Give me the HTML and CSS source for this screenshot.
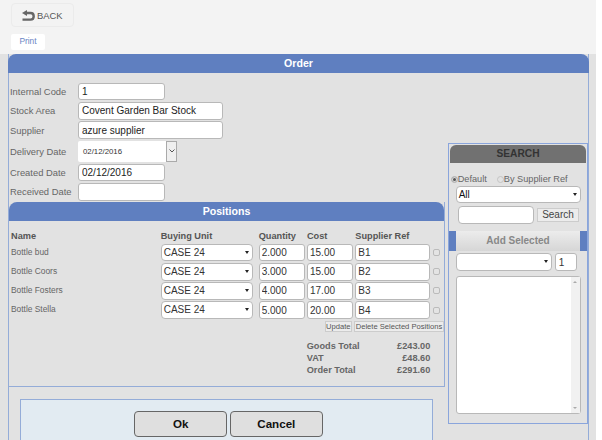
FILE: index.html
```html
<!DOCTYPE html>
<html lang="en">
<head>
    <meta charset="UTF-8">
    <title>Order</title>
    <link rel="stylesheet" href="styles.css">
</head>
<body>
    <div class="page">
        <div class="top">
            <a class="back-btn">
                <svg class="back-icon" width="13" height="11" viewBox="0 0 13 11"><path d="M5 0 L0 3 L5 6 Z" fill="#666"/><path d="M4 3 H8.5 Q11.7 3 11.7 6.2 Q11.7 9.6 8.5 9.6 H0.5" fill="none" stroke="#666" stroke-width="2.4"/></svg>
                BACK
            </a>
            <a class="print-btn">Print</a>
        </div>
        <div class="main">
            <div class="panel order">
                <div class="panel-title">Order</div>
                <div class="order-body">
                    <div class="left">
                        <div class="fields">
                            <div class="field"><label>Internal Code</label><input class="short" type="text" value="1"></div>
                            <div class="field"><label>Stock Area</label><input class="long" type="text" value="Covent Garden Bar Stock"></div>
                            <div class="field"><label>Supplier</label><input class="long" type="text" value="azure supplier"></div>
                            <div class="field date-field">
                                <label>Delivery Date</label>
                                <div class="date-box"><span class="date-val">02/12/2016</span><span class="date-arrow"><svg width="6" height="4" viewBox="0 0 6 4"><path d="M0.5 0.5 L3 3 L5.5 0.5" fill="none" stroke="#555"/></svg></span></div>
                            </div>
                            <div class="field"><label>Created Date</label><input class="short" type="text" value="02/12/2016"></div>
                            <div class="field"><label>Received Date</label><input class="short" type="text" value=""></div>
                        </div>
                        <div class="panel positions">
                            <div class="panel-title">Positions</div>
                            <div class="pos-body">
                                <div class="row head">
                                    <span class="c-name">Name</span><span class="c-unit">Buying Unit</span><span class="c-qty">Quantity</span><span class="c-cost">Cost</span><span class="c-ref">Supplier Ref</span>
                                </div>
                                <div class="row">
                                    <span class="c-name">Bottle bud</span>
                                    <span class="c-unit"><span class="sel">CASE 24<i class="caret"></i></span></span>
                                    <span class="c-qty"><input type="text" value="2.000"></span><span class="c-cost"><input type="text" value="15.00"></span><span class="c-ref"><input type="text" value="B1"></span>
                                    <span class="check"></span>
                                </div>
                                <div class="row">
                                    <span class="c-name">Bottle Coors</span>
                                    <span class="c-unit"><span class="sel">CASE 24<i class="caret"></i></span></span>
                                    <span class="c-qty"><input type="text" value="3.000"></span><span class="c-cost"><input type="text" value="15.00"></span><span class="c-ref"><input type="text" value="B2"></span>
                                    <span class="check"></span>
                                </div>
                                <div class="row">
                                    <span class="c-name">Bottle Fosters</span>
                                    <span class="c-unit"><span class="sel">CASE 24<i class="caret"></i></span></span>
                                    <span class="c-qty"><input type="text" value="4.000"></span><span class="c-cost"><input type="text" value="17.00"></span><span class="c-ref"><input type="text" value="B3"></span>
                                    <span class="check"></span>
                                </div>
                                <div class="row">
                                    <span class="c-name">Bottle Stella</span>
                                    <span class="c-unit"><span class="sel">CASE 24<i class="caret"></i></span></span>
                                    <span class="c-qty"><input type="text" value="5.000"></span><span class="c-cost"><input type="text" value="20.00"></span><span class="c-ref"><input type="text" value="B4"></span>
                                    <span class="check"></span>
                                </div>
                                <div class="pos-actions">
                                    <button class="mini">Update</button>
                                    <button class="mini">Delete Selected Positions</button>
                                </div>
                                <div class="totals">
                                    <div class="total"><span>Goods Total</span><span>£243.00</span></div>
                                    <div class="total"><span>VAT</span><span>£48.60</span></div>
                                    <div class="total"><span>Order Total</span><span>£291.60</span></div>
                                </div>
                            </div>
                        </div>
                        <div class="actions">
                            <button class="big">Ok</button>
                            <button class="big">Cancel</button>
                        </div>
                    </div>
                    <div class="search">
                        <div class="search-title">SEARCH</div>
                        <div class="search-body">
                            <div class="radios">
                                <span class="radio-item"><i class="radio on"></i>Default</span>
                                <span class="radio-item"><i class="radio"></i>By Supplier Ref</span>
                            </div>
                            <span class="sel sel-all">All<i class="caret"></i></span>
                            <div class="search-line">
                                <input class="search-input" type="text">
                                <button class="search-btn">Search</button>
                            </div>
                        </div>
                        <div class="add-bar"><span class="add-btn">Add Selected</span></div>
                        <div class="add-body">
                            <div class="add-line">
                                <span class="sel sel-empty"><i class="caret"></i></span>
                                <input class="add-qty" type="text" value="1">
                            </div>
                            <div class="listbox">
                                <div class="scrollbar"><i class="up"></i><i class="down"></i></div>
                            </div>
                        </div>
                    </div>
                </div>
            </div>
        </div>
    </div>
</body>
</html>
```

FILE: styles.css
```css
* {
    box-sizing: border-box;
}
html, body {
    margin: 0;
    padding: 0;
    height: 440px;
    overflow: hidden;
    background: #fff;
}
body {
    font-family: "Liberation Sans", Arial, sans-serif;
    font-size: 10px;
    color: #555;
}
input {
    outline: none;
    background: #fff;
}
.page {
    width: 596px;
    height: 440px;
    background: #e2e2e2;
    overflow: hidden;
}
.top {
    height: 54px;
    background: #f3f3f3;
    padding: 3px 0 0 11px;
}
.back-btn {
    display: flex;
    align-items: center;
    width: 63px;
    height: 24px;
    border: 1px solid #ebebeb;
    border-radius: 4px;
    padding-left: 10px;
    font-size: 9.4px;
    color: #555;
}
.back-icon {
    margin-right: 2px;
}
.print-btn {
    display: block;
    width: 34px;
    height: 16px;
    margin-top: 7px;
    background: #fff;
    border-radius: 2px;
    text-align: center;
    font-size: 8.4px;
    line-height: 15px;
    color: #6a85c4;
}
.main {
    padding: 0 7px 0 8px;
}
.panel {
    border: 1px solid #94acd8;
}
.panel-title {
    background: #5f7fc0;
    color: #fff;
    font-weight: bold;
    font-size: 10.6px;
    text-align: center;
    border-radius: 8px 8px 0 0;
    height: 19px;
    line-height: 18px;
}
.order {
    height: 400px;
    border: 0;
    border-left: 1px solid #94acd8;
    border-right: 1px solid #94acd8;
}
.order > .panel-title {
    margin: 0 -1px;
}
.order-body {
    display: flex;
}
.left {
    width: 435px;
    flex: none;
}
.fields {
    height: 129px;
    padding-top: 9px;
}
.field {
    display: flex;
    align-items: center;
    height: 19.3px;
    font-size: 9.4px;
}
.field label {
    width: 69px;
    flex: none;
    padding-left: 1px;
    color: #666;
}
.field input {
    height: 17.5px;
    padding: 0 3px;
    border: 1px solid #b8b8b8;
    border-radius: 3px;
    font: 10px "Liberation Sans", Arial, sans-serif;
    color: #222;
}
.short {
    width: 87px;
}
.long {
    width: 145px;
}
.date-field {
    height: 23px;
}
.date-box {
    display: flex;
    width: 99px;
    height: 21px;
}
.date-val {
    width: 88px;
    padding-left: 5px;
    background: #fff;
    font-size: 7.8px;
    line-height: 21px;
    color: #333;
    border-radius: 2px 0 0 2px;
}
.date-arrow {
    width: 11px;
    display: flex;
    align-items: center;
    justify-content: center;
    background: #efefef;
    border: 1px solid #aaa;
}
.positions {
    height: 185px;
    width: 436px;
    border-top: 0;
    border-left: 0;
}
.positions > .panel-title {
    height: 18.5px;
    line-height: 19px;
}
.pos-body {
    padding: 8px 0 0 2px;
}
.row {
    display: flex;
    align-items: center;
    height: 19.2px;
    font-size: 8.4px;
    color: #666;
}
.row.head {
    height: 14.5px;
    font-weight: bold;
    font-size: 9.2px;
    color: #555;
}
.row .c-name {
    padding-bottom: 2px;
}
.row.head .c-name {
    padding-bottom: 0;
}
.row > * {
    flex: none;
}
.c-name {
    width: 149.7px;
}
.c-unit {
    width: 98px;
}
.c-qty {
    width: 48.3px;
}
.c-cost {
    width: 48.3px;
}
.c-ref {
    width: 77.7px;
}
.row input {
    display: block;
    height: 17.5px;
    padding: 0 2px;
    border: 1px solid #b8b8b8;
    border-radius: 3px;
    font: 10px "Liberation Sans", Arial, sans-serif;
    color: #333;
}
.c-qty input {
    width: 46px;
}
.c-cost input {
    width: 45.7px;
}
.c-ref input {
    width: 74.7px;
}
.sel {
    position: relative;
    display: block;
    height: 17.5px;
    width: 92.5px;
    line-height: 15.5px;
    padding: 0 2px;
    background: #fff;
    border: 1px solid #b8b8b8;
    border-radius: 4px;
    font-size: 10px;
    color: #333;
}
.caret {
    position: absolute;
    right: 3px;
    top: 6px;
    border: 2px solid transparent;
    border-top: 3px solid #222;
    border-bottom: 0;
}
.check {
    width: 7px;
    height: 7px;
    background: #e4e4e4;
    border: 1px solid #bbb;
    border-radius: 2px;
}
.pos-actions {
    display: flex;
    justify-content: flex-end;
    gap: 2.3px;
    padding-top: 1.4px;
    height: 12px;
}
.mini {
    height: 10.5px;
    padding: 0;
    border: 1px solid #ccc;
    background: #ececec;
    font: 7.6px "Liberation Sans", Arial, sans-serif;
    color: #555;
}
.mini:first-child {
    width: 26.7px;
}
.mini:last-child {
    width: 90px;
}
.totals {
    margin: 9px 0 0 295.7px;
    width: 123.6px;
}
.total {
    display: flex;
    justify-content: space-between;
    height: 12px;
    font-size: 9.2px;
    font-weight: bold;
    color: #666;
}
.actions {
    display: flex;
    justify-content: center;
    gap: 2.6px;
    width: 413px;
    height: 60px;
    margin: 12px 0 0 11px;
    padding: 10.5px 0 0 4px;
    background: #e2ebf2;
    border: 1px solid #94acd8;
}
.big {
    width: 93px;
    height: 26.5px;
    border: 1px solid #666;
    border-radius: 4px;
    background: #dfdfdf;
    font: bold 11.6px "Liberation Sans", Arial, sans-serif;
    color: #111;
}
.search {
    width: 140px;
    height: 281px;
    flex: none;
    margin: 70px 0 0 4px;
    border: 1px solid #8aa5dc;
    padding-top: 0.5px;
}
.search-title {
    height: 18px;
    margin: 0 1px;
    background: #717171;
    border-radius: 6px 6px 0 0;
    text-align: center;
    font-weight: bold;
    font-size: 10.2px;
    line-height: 18px;
    color: #333;
}
.search-body {
    padding: 10px 2px 0 1px;
}
.radios {
    display: flex;
    height: 13px;
    padding-left: 0.7px;
    font-size: 9.2px;
    color: #666;
}
.radio-item {
    display: flex;
    align-items: center;
    margin-right: 10px;
}
.radio {
    width: 7px;
    height: 7px;
    border: 1px solid #c4c4c4;
    border-radius: 50%;
}
.radio.on {
    background: #555;
    box-shadow: inset 0 0 0 1px #ddd;
}
.sel-all {
    width: 125px;
    margin-left: 5.7px;
    color: #111;
}
.search-line {
    display: flex;
    align-items: center;
    gap: 3px;
    padding: 3px 0 0 8.3px;
}
.search-input {
    width: 76px;
    height: 17.5px;
    border: 1px solid #b8b8b8;
    border-radius: 4px;
}
.search-btn {
    width: 41.4px;
    height: 14.5px;
    padding: 0;
    border: 1px solid #ccc;
    background: #ececec;
    font: 10px "Liberation Sans", Arial, sans-serif;
    color: #444;
}
.add-bar {
    height: 20.3px;
    margin-top: 7.5px;
    padding: 0 7.3px;
    background: #5f7fc0;
}
.add-btn {
    display: block;
    height: 20.3px;
    background: linear-gradient(#ececec, #d6d6d6);
    text-align: center;
    font-weight: bold;
    font-size: 10px;
    line-height: 20px;
    color: #888;
}
.add-body {
    padding: 2px 0 0 7.3px;
}
.add-line {
    display: flex;
    gap: 2.4px;
}
.sel-empty {
    width: 96px;
}
.add-qty {
    width: 22.6px;
    height: 17.5px;
    padding: 0 3px;
    border: 1px solid #b8b8b8;
    border-radius: 3px;
    font: 10px "Liberation Sans", Arial, sans-serif;
    color: #333;
}
.listbox {
    position: relative;
    width: 124.5px;
    height: 138.3px;
    margin-top: 5px;
    background: #fff;
    border: 1px solid #b8b8b8;
    border-radius: 3px;
}
.scrollbar {
    position: absolute;
    top: 0;
    right: 0;
    bottom: 0;
    width: 9px;
    background: #f1f1f1;
}
.up, .down {
    position: absolute;
    left: 2px;
    border: 2px solid transparent;
}
.up {
    top: 4px;
    border-top: 0;
    border-bottom: 2px solid #aaa;
}
.down {
    bottom: 4px;
    border-bottom: 0;
    border-top: 2px solid #aaa;
}
```
